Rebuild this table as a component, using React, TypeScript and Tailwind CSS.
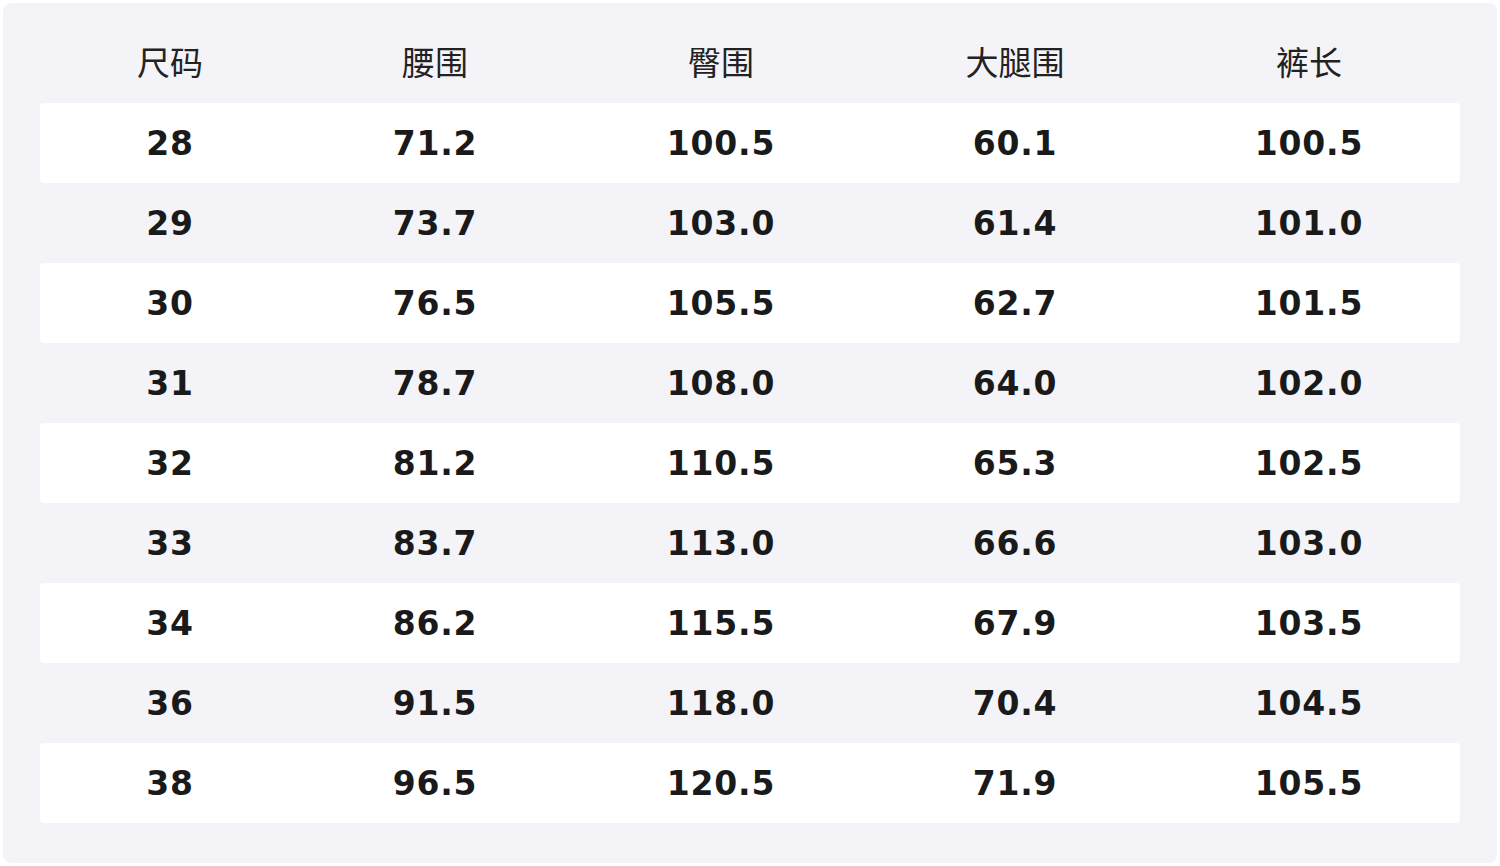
const headers = ["尺码", "腰围", "臀围", "大腿围", "裤长"]

const rows: string[][] = [
  ["28", "71.2", "100.5", "60.1", "100.5"],
  ["29", "73.7", "103.0", "61.4", "101.0"],
  ["30", "76.5", "105.5", "62.7", "101.5"],
  ["31", "78.7", "108.0", "64.0", "102.0"],
  ["32", "81.2", "110.5", "65.3", "102.5"],
  ["33", "83.7", "113.0", "66.6", "103.0"],
  ["34", "86.2", "115.5", "67.9", "103.5"],
  ["36", "91.5", "118.0", "70.4", "104.5"],
  ["38", "96.5", "120.5", "71.9", "105.5"],
]

// 列宽按截图里每列的中心位置估算
const cols = "grid grid-cols-[260px_270px_302px_286px_1fr]"

export default function App() {
  return (
    <div className="w-[1500px] h-[866px] bg-white p-[3px]">
      <div className="h-[860px] rounded-lg bg-[#f4f4f8] px-[37px] pt-[20px] pb-[40px]">
        <div className={`${cols} h-[80px] items-center text-[33px] text-[#222] font-['Noto_Sans_CJK_SC',sans-serif]`}>
          {headers.map((h) => (
            <div key={h} className="text-center leading-none -mt-[4px]">
              {h}
            </div>
          ))}
        </div>
        {rows.map((r, i) => (
          <div
            key={r[0]}
            className={`${cols} h-[80px] items-center rounded-[4px] text-[33px] font-bold tracking-[0.8px] text-[#1a1a1a] font-['DejaVu_Sans',sans-serif] ${
              i % 2 === 0 ? "bg-white" : ""
            }`}
          >
            {r.map((v, j) => (
              <div key={j} className="text-center leading-none">
                {v}
              </div>
            ))}
          </div>
        ))}
      </div>
    </div>
  )
}
